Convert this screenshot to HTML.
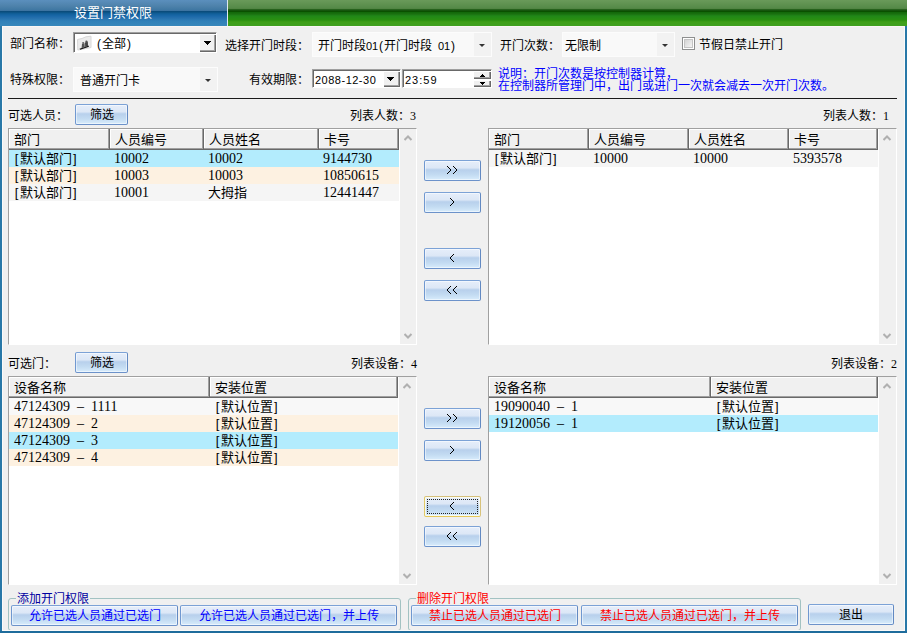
<!DOCTYPE html>
<html lang="zh-CN"><head><meta charset="utf-8">
<style>
*{box-sizing:border-box;margin:0;padding:0}
html,body{width:907px;height:633px;overflow:hidden;background:#f0f0f0}
body{position:relative;font-family:"Liberation Sans",sans-serif;font-size:12px;color:#000;line-height:14px}
.a{position:absolute;white-space:nowrap}
.n{font-family:"Liberation Serif",serif;font-size:14px}
.sv{position:absolute;shape-rendering:crispEdges}
.s6{font-family:"Liberation Serif",serif;font-size:12px}
/* title */
#tblue{position:absolute;left:0;top:0;width:227px;height:26px;background:linear-gradient(#5b8fbd 0px,#4e82ab 6px,#3f77a2 10px,#3a70a0 11px,#0a4a78 11px,#0b4f80 12px,#0e5a90 13px,#12609c 14px,#1a68a8 16px,#2670ad 18px,#3080b8 21px,#3888bb 26px)}
#tgap{position:absolute;left:227px;top:0;width:1px;height:26px;background:#dfe8ee}
#tgreen{position:absolute;left:228px;top:0;width:679px;height:26px;background:linear-gradient(#6a9a5a 0px,#558a48 8px,#4f8040 9px,#2f6a22 9px,#1f5a18 10px,#0a5000 11px,#0a5000 12px,#106808 12px,#1a7010 14px,#208818 16px,#2a9010 20px,#3fa018 22px,#40a020 26px)}
#ttl{position:absolute;left:74px;top:6px;color:#fff;font-size:13px;line-height:14px}
.fr{position:absolute;background:#2878a8}
/* buttons */
.btn{position:absolute;height:21px;border:1px solid;border-color:#7ca2d6 #6289c2 #6c92ca #7098d0;border-radius:2px;background:linear-gradient(#e6eefa 0px,#dce7f6 7px,#c4d8f0 8px,#b8d0ec 9px,#c4dcf2 14px,#d8ecfc 19px);box-shadow:inset 0 0 0 1px rgba(255,255,255,.5);text-align:center;white-space:nowrap;padding-top:4px;line-height:12px}
/* combos */
.cmb3{position:absolute;background:#fff;border-top:1px solid #a0a0a0;border-left:1px solid #a0a0a0;border-right:1px solid #fff;border-bottom:1px solid #fff;box-shadow:inset 1px 1px 0 #696969}
.cbtn{position:absolute;background:#f0f0f0;box-shadow:inset 1px 1px 0 #fff,inset -1px -1px 0 #696969,inset -2px -2px 0 #a0a0a0}
.pc{display:inline-block;width:6px;text-align:center;font-style:normal}
.d6{font-size:11px;letter-spacing:-.12px}
.sp6{display:inline-block;width:6px}
.tri{position:absolute;width:0;height:0;border-left:4px solid transparent;border-right:4px solid transparent;border-top:4px solid #000}
.cflat{position:absolute;height:25px;background:#f9f9f9;border:1px solid #fcfcfc}
.cflat .dd{position:absolute;top:0;bottom:0;right:0;width:17px;background:#f2f2f2}
.cflat .tri{left:5px;top:11px;border-left:3.5px solid transparent;border-right:3.5px solid transparent;border-top:3.5px solid #333}
/* list views */
.lv{position:absolute;width:409px;background:#fff;border-top:1px solid #a0a0a0;border-left:1px solid #a0a0a0;border-right:1px solid #fff;border-bottom:1px solid #fff;font-size:13px;line-height:13px}
.hd{position:absolute;top:0;height:21px;background:#f0f0f0;box-shadow:inset -1px -1px 0 #696969,inset -2px -2px 0 #a0a0a0,inset 1px 1px 0 #fff}
.hd span{position:absolute;left:5px;top:4px}
.row{position:absolute;left:0;height:17px;width:389px}
.row span{position:absolute;top:2px}
.row span.n{top:2px}
.bk{display:inline-block;width:7px;text-align:center;font-style:normal}
.bkr{display:inline-block;width:7px;padding-left:1px;font-style:normal}
.sb{position:absolute;top:0;bottom:0;left:389px;width:18px;background:#f0f0f0;border-left:1px solid #fff}
.sb svg{position:absolute;left:4px}
.grp{position:absolute;border:1px solid #a2c2c2;border-radius:3px}
.blue{color:#0000ff}.red{color:#ff0000}
</style></head><body>

<!-- title bar -->
<div id="tblue"></div><div id="tgap"></div><div id="tgreen"></div><div id="ttl">设置门禁权限</div>
<!-- frame -->
<div class="fr" style="left:0;top:26px;width:2px;height:607px"></div>
<div class="fr" style="left:905px;top:26px;width:2px;height:607px"></div>
<div class="fr" style="left:0;top:631px;width:907px;height:2px;background:#1e6c9c"></div>
<div class="a" style="left:2px;top:26px;width:903px;height:1px;background:#faf6f4"></div>

<!-- row 1 -->
<div class="a" style="left:10px;top:37px">部门名称：</div>
<div class="cmb3" style="left:73px;top:32px;width:144px;height:21px">
  <svg class="sv" style="left:3px;top:2px;shape-rendering:auto" width="15" height="16" viewBox="0 0 15 16"><path d="M0.5 4.5 L5 3.5 L9 1.8 L14 1.2 L14 12.5 L0.8 15 Z" fill="#ececec" stroke="#d8d8d8" stroke-width="1"/><path d="M2.5 13.8 L11.5 10.5 L12 11.8 L3.2 14.8 Z" fill="#151515"/><path d="M5 9 L7.5 8.2 L7.8 12.2 L4.6 13.2 Z" fill="#555"/><path d="M8 7.5 L10.8 6.6 L11 11 L8.2 12 Z" fill="#444"/><circle cx="6.2" cy="8" r="1.1" fill="#666"/><circle cx="9.4" cy="6.6" r="1.1" fill="#555"/></svg>
  <div class="a" style="left:22px;top:4px"><i class="pc">(</i>全部<i class="pc">)</i></div>
  <div class="cbtn" style="left:125px;top:1px;width:17px;height:18px"><svg class="sv" style="left:5px;top:7px" width="7" height="4"><path d="M0 0h7v1h-7zM1 1h5v1h-5zM2 2h3v1h-3zM3 3h1v1h-1z"/></svg></div>
</div>
<div class="a" style="left:225px;top:39px">选择开门时段：</div>
<div class="cflat" style="left:312px;top:32px;width:180px"><div class="a" style="left:5px;top:6px">开门时段<span class="d6">01</span><i class="pc">(</i>开门时段<i class="sp6"></i><span class="d6">01</span><i class="pc">)</i></div><div class="dd"><div class="tri"></div></div></div>
<div class="a" style="left:500px;top:39px">开门次数：</div>
<div class="cflat" style="left:562px;top:32px;width:113px"><div class="a" style="left:2px;top:6px">无限制</div><div class="dd"><div class="tri"></div></div></div>
<div class="a" style="left:682px;top:37px;width:13px;height:13px;border:1px solid #8e8f8f;background:#fff"><div class="a" style="left:1px;top:1px;width:9px;height:9px;background:linear-gradient(135deg,#d4d4d4,#f4f4f4);border:1px solid #c4c4c4"></div></div>
<div class="a" style="left:699px;top:38px">节假日禁止开门</div>

<!-- row 2 -->
<div class="a" style="left:10px;top:73px">特殊权限：</div>
<div class="cflat" style="left:73px;top:67px;width:145px"><div class="a" style="left:6px;top:6px">普通开门卡</div><div class="dd"><div class="tri"></div></div></div>
<div class="a" style="left:249px;top:73px">有效期限：</div>
<div class="cmb3" style="left:312px;top:69px;width:89px;height:19px">
  <div class="a" style="left:2px;top:3px;font-size:11px;letter-spacing:.5px">2088-12-30</div>
  <div class="cbtn" style="left:70px;top:1px;width:17px;height:16px"><svg class="sv" style="left:4px;top:6px" width="7" height="4"><path d="M0 0h7v1h-7zM1 1h5v1h-5zM2 2h3v1h-3zM3 3h1v1h-1z"/></svg></div>
</div>
<div class="cmb3" style="left:402px;top:69px;width:90px;height:19px">
  <div class="a" style="left:2px;top:3px;font-size:11px;letter-spacing:1px">23:59</div>
  <div class="cbtn" style="left:70px;top:1px;width:18px;height:8px"><svg class="sv" style="left:7px;top:3px" width="5" height="3"><path d="M2 0h1v1h-1zM1 1h3v1h-3zM0 2h5v1h-5z"/></svg></div>
  <div class="cbtn" style="left:70px;top:10px;width:18px;height:7px"><svg class="sv" style="left:7px;top:2px" width="5" height="3"><path d="M0 0h5v1h-5zM1 1h3v1h-3zM2 2h1v1h-1z"/></svg></div>
</div>
<div class="a blue" style="left:498px;top:68px;line-height:12px">说明：开门次数是按控制器计算，<br>在控制器所管理门中，出门或进门一次就会减去一次开门次数。</div>

<div class="a" style="left:8px;top:98px;width:889px;height:1px;background:#1a1a1a"></div>

<!-- upper labels -->
<div class="a" style="left:8px;top:109px">可选人员：</div>
<div class="btn" style="left:75px;top:104px;width:53px">筛选</div>
<div class="a" style="left:350px;top:109px">列表人数：<span class="s6">3</span></div>
<div class="a" style="left:823px;top:109px">列表人数：<span class="s6">1</span></div>

<!-- upper left list -->
<div class="lv" style="left:8px;top:128px;height:217px">
  <div class="hd" style="left:0;width:101px"><span>部门</span></div>
  <div class="hd" style="left:101px;width:94px"><span>人员编号</span></div>
  <div class="hd" style="left:195px;width:115px"><span>人员姓名</span></div>
  <div class="hd" style="left:310px;width:80px"><span>卡号</span></div>
  <div class="row" style="width:390px;top:21px;background:#b3ecfd"><span style="left:4px"><i class="bk">[</i>默认部门<i class="bkr">]</i></span><span class="n" style="left:105px">10002</span><span class="n" style="left:199px">10002</span><span class="n" style="left:314px">9144730</span></div>
  <div class="row" style="width:390px;top:38px;background:#fdf1e1"><span style="left:4px"><i class="bk">[</i>默认部门<i class="bkr">]</i></span><span class="n" style="left:105px">10003</span><span class="n" style="left:199px">10003</span><span class="n" style="left:314px">10850615</span></div>
  <div class="row" style="width:390px;top:55px;background:#f5f5f5"><span style="left:4px"><i class="bk">[</i>默认部门<i class="bkr">]</i></span><span class="n" style="left:105px">10001</span><span style="left:199px">大拇指</span><span class="n" style="left:314px">12441447</span></div>
  <div class="sb" style="left:390px;width:17px">
    <svg style="top:5px" width="9" height="7"><polyline points="0.5,6 4,2.5 7.5,6" fill="none" stroke="#b0b0b0" stroke-width="2"/></svg>
    <svg style="bottom:4px" width="9" height="7"><polyline points="0.5,1 4,4.5 7.5,1" fill="none" stroke="#b0b0b0" stroke-width="2"/></svg>
  </div>
</div>

<!-- upper right list -->
<div class="lv" style="left:488px;top:128px;height:217px">
  <div class="hd" style="left:0;width:100px"><span>部门</span></div>
  <div class="hd" style="left:100px;width:100px"><span>人员编号</span></div>
  <div class="hd" style="left:200px;width:100px"><span>人员姓名</span></div>
  <div class="hd" style="left:300px;width:89px"><span>卡号</span></div>
  <div class="row" style="top:21px;background:#f5f5f5"><span style="left:4px"><i class="bk">[</i>默认部门<i class="bkr">]</i></span><span class="n" style="left:104px">10000</span><span class="n" style="left:204px">10000</span><span class="n" style="left:304px">5393578</span></div>
  <div class="sb" style="left:389px">
    <svg style="top:5px" width="9" height="7"><polyline points="0.5,6 4,2.5 7.5,6" fill="none" stroke="#b0b0b0" stroke-width="2"/></svg>
    <svg style="bottom:4px" width="9" height="7"><polyline points="0.5,1 4,4.5 7.5,1" fill="none" stroke="#b0b0b0" stroke-width="2"/></svg>
  </div>
</div>

<!-- middle buttons upper -->
<div class="btn" style="left:424px;top:160px;width:57px"></div>
<div class="btn" style="left:424px;top:192px;width:57px"></div>
<div class="btn" style="left:424px;top:248px;width:57px"></div>
<div class="btn" style="left:424px;top:280px;width:57px"></div>
<svg class="sv" style="left:447px;top:166px" width="10" height="8"><path d="M0 0h1v1h-1zM1 1h1v1h-1zM2 2h1v1h-1zM3 3h1v2h-1zM2 5h1v1h-1zM1 6h1v1h-1zM0 7h1v1h-1zM6 0h1v1h-1zM7 1h1v1h-1zM8 2h1v1h-1zM9 3h1v2h-1zM8 5h1v1h-1zM7 6h1v1h-1zM6 7h1v1h-1z" fill="#000"/></svg>
<svg class="sv" style="left:450px;top:198px" width="4" height="8"><path d="M0 0h1v1h-1zM1 1h1v1h-1zM2 2h1v1h-1zM3 3h1v2h-1zM2 5h1v1h-1zM1 6h1v1h-1zM0 7h1v1h-1z" fill="#000"/></svg>
<svg class="sv" style="left:450px;top:254px" width="4" height="8"><path d="M3 0h1v1h-1zM2 1h1v1h-1zM1 2h1v1h-1zM0 3h1v2h-1zM1 5h1v1h-1zM2 6h1v1h-1zM3 7h1v1h-1z" fill="#000"/></svg>
<svg class="sv" style="left:447px;top:286px" width="10" height="8"><path d="M3 0h1v1h-1zM2 1h1v1h-1zM1 2h1v1h-1zM0 3h1v2h-1zM1 5h1v1h-1zM2 6h1v1h-1zM3 7h1v1h-1zM9 0h1v1h-1zM8 1h1v1h-1zM7 2h1v1h-1zM6 3h1v2h-1zM7 5h1v1h-1zM8 6h1v1h-1zM9 7h1v1h-1z" fill="#000"/></svg>

<!-- lower labels -->
<div class="a" style="left:8px;top:357px">可选门：</div>
<div class="btn" style="left:75px;top:352px;width:53px">筛选</div>
<div class="a" style="left:351px;top:357px">列表设备：<span class="s6">4</span></div>
<div class="a" style="left:831px;top:357px">列表设备：<span class="s6">2</span></div>

<!-- lower left list -->
<div class="lv" style="left:8px;top:376px;height:209px">
  <div class="hd" style="left:0;width:201px"><span>设备名称</span></div>
  <div class="hd" style="left:201px;width:188px"><span>安装位置</span></div>
  <div class="row" style="top:21px;background:#f8f8f8"><span class="n" style="left:5px;word-spacing:3.5px">47124309 – 1111</span><span style="left:205px"><i class="bk">[</i>默认位置<i class="bkr">]</i></span></div>
  <div class="row" style="top:38px;background:#fdf1e1"><span class="n" style="left:5px;word-spacing:3.5px">47124309 – 2</span><span style="left:205px"><i class="bk">[</i>默认位置<i class="bkr">]</i></span></div>
  <div class="row" style="top:55px;background:#b3ecfd"><span class="n" style="left:5px;word-spacing:3.5px">47124309 – 3</span><span style="left:205px"><i class="bk">[</i>默认位置<i class="bkr">]</i></span></div>
  <div class="row" style="top:72px;background:#fdf1e1"><span class="n" style="left:5px;word-spacing:3.5px">47124309 – 4</span><span style="left:205px"><i class="bk">[</i>默认位置<i class="bkr">]</i></span></div>
  <div class="sb" style="left:389px">
    <svg style="top:5px" width="9" height="7"><polyline points="0.5,6 4,2.5 7.5,6" fill="none" stroke="#b0b0b0" stroke-width="2"/></svg>
    <svg style="bottom:4px" width="9" height="7"><polyline points="0.5,1 4,4.5 7.5,1" fill="none" stroke="#b0b0b0" stroke-width="2"/></svg>
  </div>
</div>

<!-- lower right list -->
<div class="lv" style="left:488px;top:376px;height:209px">
  <div class="hd" style="left:0;width:222px"><span>设备名称</span></div>
  <div class="hd" style="left:222px;width:167px"><span>安装位置</span></div>
  <div class="row" style="top:21px;background:#f8f8f8"><span class="n" style="left:5px;word-spacing:3.5px">19090040 – 1</span><span style="left:226px"><i class="bk">[</i>默认位置<i class="bkr">]</i></span></div>
  <div class="row" style="top:38px;background:#b3ecfd"><span class="n" style="left:5px;word-spacing:3.5px">19120056 – 1</span><span style="left:226px"><i class="bk">[</i>默认位置<i class="bkr">]</i></span></div>
  <div class="sb" style="left:389px">
    <svg style="top:5px" width="9" height="7"><polyline points="0.5,6 4,2.5 7.5,6" fill="none" stroke="#b0b0b0" stroke-width="2"/></svg>
    <svg style="bottom:4px" width="9" height="7"><polyline points="0.5,1 4,4.5 7.5,1" fill="none" stroke="#b0b0b0" stroke-width="2"/></svg>
  </div>
</div>

<!-- middle buttons lower -->
<div class="btn" style="left:424px;top:408px;width:57px"></div>
<div class="btn" style="left:424px;top:440px;width:57px"></div>
<div class="btn" style="left:424px;top:496px;width:57px;border-color:#d6c07c #d8c27a #e6c95a #e0c868;box-shadow:inset 0 0 0 1px rgba(255,255,240,.8)"><div class="a" style="left:2px;top:2px;width:51px;height:15px;border:1px dotted #222"></div></div>
<div class="btn" style="left:424px;top:526px;width:57px"></div>
<svg class="sv" style="left:447px;top:414px" width="10" height="8"><path d="M0 0h1v1h-1zM1 1h1v1h-1zM2 2h1v1h-1zM3 3h1v2h-1zM2 5h1v1h-1zM1 6h1v1h-1zM0 7h1v1h-1zM6 0h1v1h-1zM7 1h1v1h-1zM8 2h1v1h-1zM9 3h1v2h-1zM8 5h1v1h-1zM7 6h1v1h-1zM6 7h1v1h-1z" fill="#000"/></svg>
<svg class="sv" style="left:450px;top:446px" width="4" height="8"><path d="M0 0h1v1h-1zM1 1h1v1h-1zM2 2h1v1h-1zM3 3h1v2h-1zM2 5h1v1h-1zM1 6h1v1h-1zM0 7h1v1h-1z" fill="#000"/></svg>
<svg class="sv" style="left:450px;top:502px" width="4" height="8"><path d="M3 0h1v1h-1zM2 1h1v1h-1zM1 2h1v1h-1zM0 3h1v2h-1zM1 5h1v1h-1zM2 6h1v1h-1zM3 7h1v1h-1z" fill="#000"/></svg>
<svg class="sv" style="left:447px;top:532px" width="10" height="8"><path d="M3 0h1v1h-1zM2 1h1v1h-1zM1 2h1v1h-1zM0 3h1v2h-1zM1 5h1v1h-1zM2 6h1v1h-1zM3 7h1v1h-1zM9 0h1v1h-1zM8 1h1v1h-1zM7 2h1v1h-1zM6 3h1v2h-1zM7 5h1v1h-1zM8 6h1v1h-1zM9 7h1v1h-1z" fill="#000"/></svg>

<!-- bottom groups -->
<div class="grp" style="left:8px;top:598px;width:393px;height:33px"></div>
<div class="a" style="left:16px;top:592px;padding:0 1px;background:#f0f0f0;color:#0000a0">添加开门权限</div>
<div class="btn blue" style="left:11px;top:605px;width:167px">允许已选人员通过已选门</div>
<div class="btn blue" style="left:180px;top:605px;width:217px">允许已选人员通过已选门，并上传</div>
<div class="grp" style="left:408px;top:598px;width:393px;height:33px"></div>
<div class="a red" style="left:416px;top:592px;padding:0 1px;background:#f0f0f0">删除开门权限</div>
<div class="btn red" style="left:411px;top:605px;width:167px">禁止已选人员通过已选门</div>
<div class="btn red" style="left:581px;top:605px;width:217px">禁止已选人员通过已选门，并上传</div>
<div class="btn" style="left:808px;top:604px;width:86px">退出</div>

<div class="a" style="left:2px;top:630px;width:903px;height:1px;background:#fafafa"></div>
<div class="a" style="left:2px;top:27px;width:1px;height:603px;background:#fafafa"></div>
<div class="a" style="left:904px;top:27px;width:1px;height:603px;background:#fafafa"></div>
</body></html>
